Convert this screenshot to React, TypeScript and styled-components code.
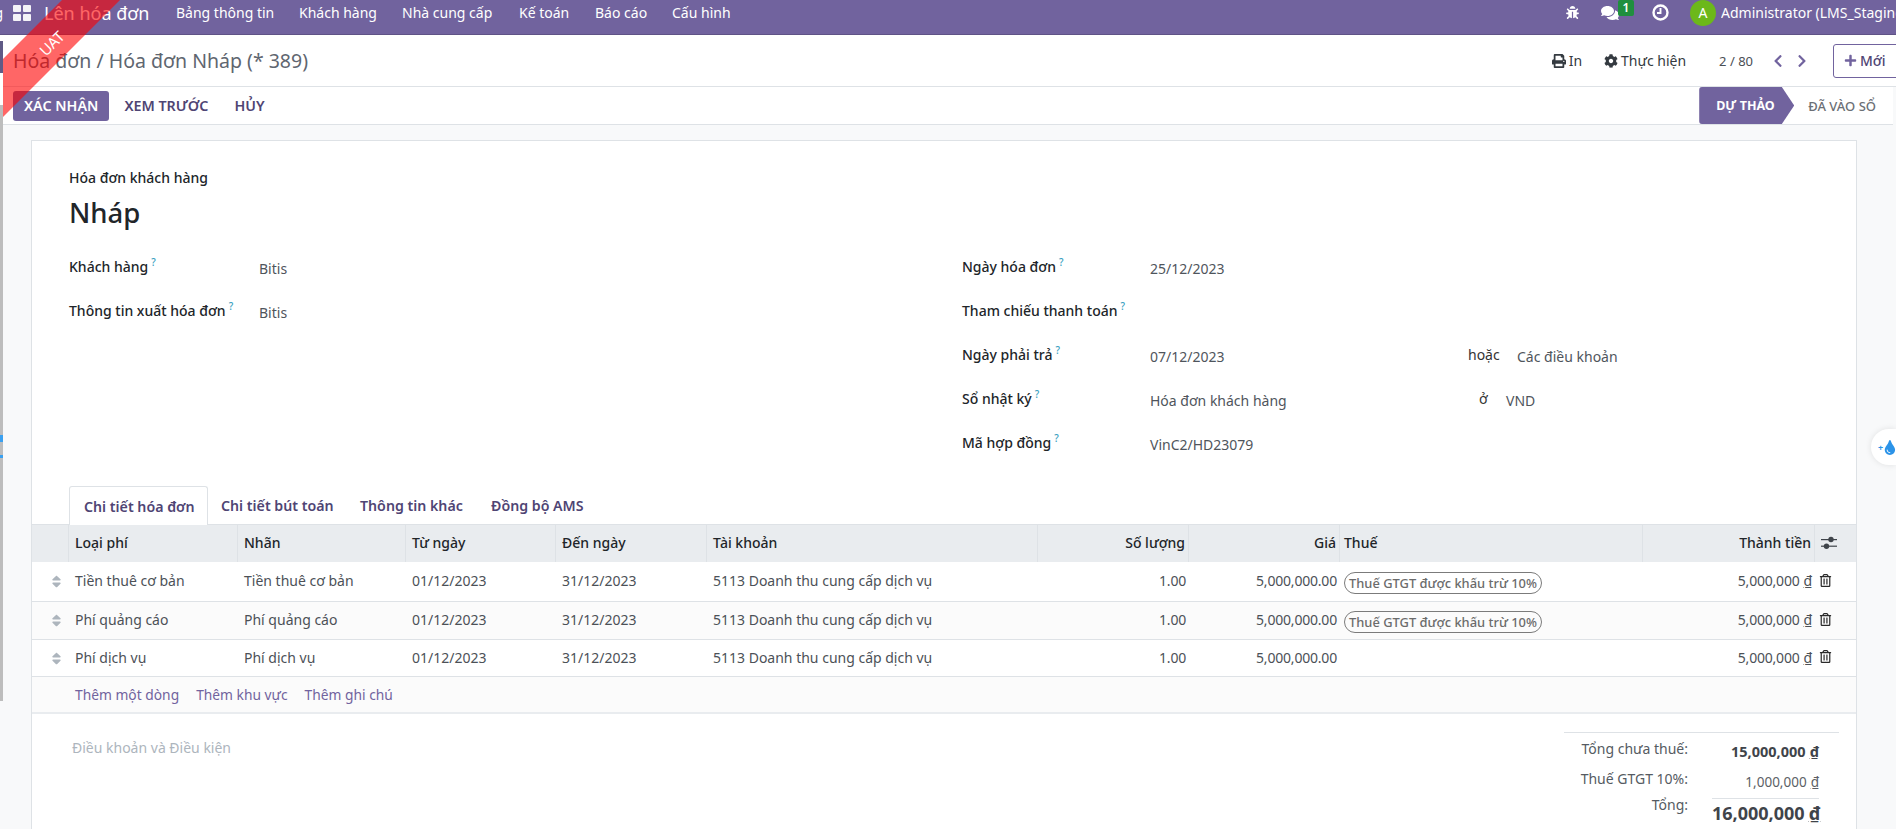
import React from "react";
import styled, { createGlobalStyle } from "styled-components";
import {
  FaBug,
  FaCog,
  FaChevronLeft,
  FaChevronRight,
  FaComments,
  FaPlus,
  FaPrint,
  FaRegTrashAlt,
  FaSort,
  FaTint,
} from "react-icons/fa";

const PURPLE = "#71639e";
const FONT = `"Noto Sans", "Open Sans", sans-serif`;

const GlobalStyle = createGlobalStyle`
  html, body {
    margin: 0;
    height: 829px;
    overflow: hidden;
    background: #f8f9fa;
    font-family: ${FONT};
    font-size: 14px;
    color: #212529;
  }
`;

const Page = styled.div`
  position: relative;
  width: 1896px;
  height: 829px;
  overflow: hidden;
  display: flex;
  flex-direction: column;
`;

const TopBar = styled.header`
  height: 35px;
  flex: none;
  background: ${PURPLE};
  border-bottom: 1px solid #5f5386;
  box-sizing: border-box;
  padding-bottom: 9px;
  display: flex;
  align-items: center;
  color: #fff;
  white-space: nowrap;
  overflow: hidden;
`;

const ClippedText = styled.span`
  width: 3px;
  overflow: hidden;
  direction: rtl;
  font-size: 14px;
  margin-right: 10px;
`;

const AppsGrid = styled.span`
  display: grid;
  grid-template-columns: 8px 8px;
  grid-template-rows: 7px 7px;
  gap: 2px;
  margin-right: 13px;

  i {
    background: #fff;
    opacity: 0.92;
    border-radius: 1px;
  }
`;

const AppName = styled.span`
  font-size: 18px;
  width: 132px;
`;

const MenuList = styled.nav`
  display: flex;
  flex: 1;
  font-size: 14px;
`;

const MenuItem = styled.span<{ $w: number }>`
  width: ${(p) => p.$w}px;
`;

const SysTray = styled.div`
  display: flex;
  align-items: center;
  font-size: 14px;
`;

const TrayIcon = styled.span<{ $mr: number }>`
  position: relative;
  display: flex;
  margin-right: ${(p) => p.$mr}px;
`;

const Badge = styled.span`
  position: absolute;
  left: 17px;
  top: -4px;
  width: 16px;
  height: 16px;
  background: #1f8f3e;
  border-radius: 2px;
  font-size: 12px;
  font-weight: 600;
  line-height: 15px;
  text-align: center;
`;

const Avatar = styled.span`
  width: 26px;
  height: 26px;
  border-radius: 50%;
  background: #6cb81a;
  font-size: 14px;
  line-height: 26px;
  text-align: center;
  margin-right: 5px;
`;

const UserName = styled.span`
  width: 175px;
  overflow: hidden;
`;

const Body = styled.div`
  flex: 1;
  display: flex;
  min-height: 0;
`;

const Rail = styled.div`
  width: 3px;
  flex: none;
  position: relative;
  background: linear-gradient(
    to bottom,
    #fff 0 6px,
    #5f5a86 6px 38px,
    #fff 38px 70px,
    #bdbdbd 70px 666px,
    #f8f9fa 666px
  );
`;

const RailMark = styled.span`
  position: absolute;
  left: 0;
  top: 396px;
  width: 3px;
  height: 34px;
  background: linear-gradient(
    to bottom,
    transparent 0 4px,
    #3aa0f0 4px 11px,
    transparent 11px 24px,
    #3aa0f0 24px 27px,
    transparent 27px
  );
`;

const Main = styled.main`
  flex: 1;
  min-width: 0;
  display: flex;
  flex-direction: column;
`;

const ControlRow = styled.div`
  height: 51px;
  flex: none;
  background: #fff;
  border-bottom: 1px solid #dee2e6;
  display: flex;
  align-items: center;
  padding-left: 10px;
  white-space: nowrap;
`;

const Breadcrumb = styled.div`
  flex: 1;
  font-size: 19.5px;
  color: #5f6670;
`;

const ActionLink = styled.span<{ $ml: number }>`
  display: flex;
  align-items: center;
  gap: 3px;
  margin-left: ${(p) => p.$ml}px;
  color: #343a40;
  font-size: 14px;

  svg {
    font-size: 14px;
  }
`;

const Pager = styled.span`
  margin-left: 33px;
  color: #4a4f55;
  font-size: 13px;
`;

const PagerArrow = styled.span<{ $ml: number }>`
  display: flex;
  margin-left: ${(p) => p.$ml}px;
  color: ${PURPLE};
  font-size: 14px;
`;

const NewButton = styled.span`
  box-sizing: border-box;
  width: 66px;
  height: 34px;
  margin-left: 24px;
  margin-right: -3px;
  border: 1px solid ${PURPLE};
  border-radius: 3px;
  display: flex;
  align-items: center;
  padding-left: 10px;
  gap: 3px;
  color: #4f4574;
  font-weight: 500;

  svg {
    font-size: 13px;
    color: ${PURPLE};
  }
`;

const ActionBar = styled.div`
  height: 38px;
  flex: none;
  margin-right: 3px;
  background: #fff;
  border-bottom: 1px solid #dee2e6;
  box-sizing: border-box;
  display: flex;
  align-items: center;
  padding-left: 10px;
`;

const ActionBtn = styled.span<{ $primary?: boolean }>`
  height: 30px;
  display: flex;
  align-items: center;
  padding: 0 11px;
  margin-right: 4px;
  border-radius: 3px;
  font-size: 14.3px;
  font-weight: 600;
  color: ${(p) => (p.$primary ? "#fff" : "#4f4574")};
  background: ${(p) => (p.$primary ? PURPLE : "transparent")};
`;

const StatusBar = styled.div`
  margin-left: auto;
  display: flex;
  align-self: stretch;
  align-items: center;
  white-space: nowrap;
`;

const StatusActive = styled.span`
  width: 95px;
  height: 37px;
  box-sizing: border-box;
  padding-left: 17px;
  display: flex;
  align-items: center;
  background: ${PURPLE};
  color: #fff;
  font-size: 12.5px;
  font-weight: 700;
  border-radius: 3px 0 0 3px;
  clip-path: polygon(0 0, 87% 0, 100% 50%, 87% 100%, 0 100%);
`;

const StatusNext = styled.span`
  margin-left: 14px;
  margin-right: 17px;
  font-size: 13px;
  font-weight: 500;
  color: #6b6f75;
`;

const Scroll = styled.div`
  flex: 1;
  padding: 15px 39px 0 28px;
  min-height: 0;
`;

const Sheet = styled.section`
  background: #fff;
  border: 1px solid #dee2e6;
  border-bottom: 0;
  height: 100%;
  box-sizing: border-box;
`;

const SheetHead = styled.div`
  padding: 27px 37px 0;
`;

const Kind = styled.div`
  font-size: 14px;
  line-height: 20px;
  font-weight: 500;
`;

const Title = styled.h1`
  margin: 5px 0 0;
  font-size: 27.5px;
  line-height: 40px;
  font-weight: 500;
`;

const FormGrid = styled.div`
  display: grid;
  grid-template-columns: 893px 1fr;
  padding: 24px 37px 0;
  height: 253px;
  box-sizing: border-box;
`;

const FormCol = styled.div`
  display: flex;
  flex-direction: column;
`;

const Field = styled.div<{ $h: number }>`
  height: ${(p) => p.$h}px;
  display: flex;
  align-items: flex-start;
`;

const Label = styled.span<{ $w: number }>`
  width: ${(p) => p.$w}px;
  flex: none;
  font-size: 14px;
  font-weight: 500;
  line-height: 20px;

  sup {
    margin-left: 3px;
    font-size: 10px;
    line-height: 0;
    color: #3a9fbf;
  }
`;

const Value = styled.span<{ $w?: number }>`
  width: ${(p) => (p.$w ? `${p.$w}px` : "auto")};
  flex: none;
  font-size: 14px;
  line-height: 24px;
  color: #4f555c;
`;

const Connector = styled.span<{ $w: number }>`
  width: ${(p) => p.$w}px;
  flex: none;
  font-size: 14px;
  line-height: 20px;
  color: #333;
`;

const Tabs = styled.div`
  display: flex;
  height: 38px;
  padding-left: 37px;
  border-bottom: 1px solid #dee2e6;
  box-sizing: content-box;
`;

const Tab = styled.span<{ $active?: boolean; $w: number }>`
  width: ${(p) => p.$w}px;
  box-sizing: border-box;
  height: 39px;
  padding-left: ${(p) => (p.$active ? 14 : 13)}px;
  display: flex;
  align-items: center;
  font-size: 14.2px;
  font-weight: 600;
  color: #4f4574;
  white-space: nowrap;
  ${(p) =>
    p.$active &&
    `
    background: #fff;
    border: 1px solid #dee2e6;
    border-bottom: 0;
    border-radius: 3px 3px 0 0;
  `}
`;

const COLUMNS =
  "37px 169px 168px 150px 151px 331px 151px 151px 303px 172px 41px";

const TableHead = styled.div`
  display: grid;
  grid-template-columns: ${COLUMNS};
  height: 37px;
  background: #e9ecef;
`;

const Th = styled.div<{ $right?: boolean; $tight?: boolean }>`
  display: flex;
  align-items: center;
  justify-content: ${(p) => (p.$right ? "flex-end" : "flex-start")};
  padding: 0 3px 2px ${(p) => (p.$tight ? 4 : 6)}px;
  border-right: 1px solid #dee2e6;
  font-size: 14px;
  font-weight: 500;
  box-sizing: border-box;
  min-width: 0;

  &:last-child {
    border-right: 0;
  }
`;

const Row = styled.div<{ $h: number; $even?: boolean }>`
  display: grid;
  grid-template-columns: ${COLUMNS};
  height: ${(p) => p.$h}px;
  box-sizing: border-box;
  background: ${(p) => (p.$even ? "#fbfbfb" : "#fff")};
  border-bottom: 1px solid #dee2e6;
`;

const Td = styled.div<{ $right?: boolean; $tight?: boolean }>`
  display: flex;
  align-items: center;
  justify-content: ${(p) => (p.$right ? "flex-end" : "flex-start")};
  padding: 0 3px 2px ${(p) => (p.$tight ? 4 : 6)}px;
  font-size: 14px;
  letter-spacing: ${(p) => (p.$right ? "-0.2px" : "0")};
  color: #4c5157;
  white-space: nowrap;
  box-sizing: border-box;
  min-width: 0;
`;

const SortCell = styled(Td)`
  justify-content: flex-end;
  padding-right: 5px;
  padding-bottom: 0;
  color: #adb5bd;
  font-size: 15px;
`;

const TrashCell = styled(Td)`
  padding-left: 4px;
  color: #2b2b2b;
  font-size: 13px;
  margin-top: -1px;
`;

const TaxPill = styled.span`
  border: 1px solid #7b7b7b;
  border-radius: 11px;
  padding: 0 4px;
  height: 22px;
  margin-top: 5px;
  box-sizing: border-box;
  line-height: 21px;
  font-size: 12.9px;
  font-weight: 500;
  color: #6b6b6b;
`;

const Currency = styled.span`
  text-decoration: underline;
  margin-left: 4px;
`;

const AddRow = styled.div`
  height: 37px;
  box-sizing: border-box;
  display: flex;
  align-items: center;
  gap: 17px;
  background: #fbfbfb;
  border-bottom: 2px solid #e9ecef;
  padding-left: 43px;
  font-size: 13.8px;
  color: #71639e;
`;

const Bottom = styled.div`
  display: flex;
  justify-content: space-between;
  align-items: flex-start;
  padding: 18px 17px 0 40px;
`;

const Terms = styled.div`
  margin-top: 6px;
  font-size: 14px;
  color: #adb5bd;
`;

const Totals = styled.div`
  width: 275px;
  border-top: 1px solid #dee2e6;
`;

const TotalRow = styled.div<{ $h: number }>`
  height: ${(p) => p.$h}px;
  display: grid;
  grid-template-columns: 124px 24px 107px;
  align-items: center;
`;

const TotalLabel = styled.span<{ $up: number }>`
  font-size: 14px;
  color: #555b62;
  text-align: right;
  margin-top: -${(p) => p.$up}px;
`;

const TotalValue = styled.span<{ $size: number; $bold?: boolean; $rule?: boolean }>`
  grid-column: 3;
  text-align: right;
  font-size: ${(p) => p.$size}px;
  font-weight: ${(p) => (p.$bold ? 700 : 400)};
  color: ${(p) => (p.$bold ? "#3f444a" : "#5c5f66")};
  white-space: nowrap;
  ${(p) => p.$rule && "border-top: 1px solid #dee2e6; padding-top: 2px;"}
`;

const Ribbon = styled.div`
  position: absolute;
  left: 3px;
  top: 0;
  width: 130px;
  height: 130px;
  overflow: hidden;
  pointer-events: none;
`;

const RibbonBand = styled.div`
  position: absolute;
  left: -60px;
  top: 25px;
  width: 205px;
  height: 41px;
  box-sizing: border-box;
  padding-left: 12px;
  transform: rotate(-45deg);
  background: rgba(255, 0, 0, 0.6);
  color: #fff;
  font-size: 15px;
  line-height: 46px;
  text-align: center;
`;

const DropWidget = styled.div`
  position: absolute;
  right: 0;
  top: 429px;
  width: 25px;
  height: 36px;
  background: #fff;
  border-radius: 18px 0 0 18px;
  box-shadow: 0 0 6px rgba(0, 0, 0, 0.1);
  display: flex;
  align-items: center;
  padding-left: 7px;
  box-sizing: border-box;
  color: #2b93e8;
  font-size: 15px;
  gap: 1px;

  small {
    font-size: 9px;
    font-weight: 700;
  }
`;

const AdjustIcon = () => (
  <svg width="16" height="14" viewBox="0 0 16 14" fill="#3f444a">
    <rect x="0" y="3" width="16" height="1.2" />
    <rect x="0" y="9.6" width="16" height="1.2" />
    <circle cx="10" cy="3.5" r="2.7" />
    <circle cx="5.5" cy="10.2" r="2.7" />
  </svg>
);

const ClockIcon = () => (
  <svg width="17" height="17" viewBox="0 0 17 17" fill="none" stroke="#fff">
    <circle cx="8.5" cy="8.5" r="7" strokeWidth="2.4" />
    <path d="M8.5 4v5H5" strokeWidth="1.9" />
  </svg>
);

const taxLabels = ["Thuế GTGT được khấu trừ 10%", "Thuế GTGT được khấu trừ 10%", ""];

const lines = [
  { name: "Tiền thuê cơ bản", h: 40 },
  { name: "Phí quảng cáo", h: 38 },
  { name: "Phí dịch vụ", h: 37 },
];

function App() {
  return (
    <Page>
      <GlobalStyle />
      <TopBar>
        <ClippedText>g</ClippedText>
        <AppsGrid>
          <i />
          <i />
          <i />
          <i />
        </AppsGrid>
        <AppName>Lên hóa đơn</AppName>
        <MenuList>
          <MenuItem $w={123}>Bảng thông tin</MenuItem>
          <MenuItem $w={103}>Khách hàng</MenuItem>
          <MenuItem $w={117}>Nhà cung cấp</MenuItem>
          <MenuItem $w={76}>Kế toán</MenuItem>
          <MenuItem $w={77}>Báo cáo</MenuItem>
          <MenuItem $w={80}>Cấu hình</MenuItem>
        </MenuList>
        <SysTray>
          <TrayIcon $mr={22}>
            <FaBug size={13} />
          </TrayIcon>
          <TrayIcon $mr={33}>
            <FaComments size={18} />
            <Badge>1</Badge>
          </TrayIcon>
          <TrayIcon $mr={21}>
            <ClockIcon />
          </TrayIcon>
          <Avatar>A</Avatar>
          <UserName>Administrator (LMS_Staging)</UserName>
        </SysTray>
      </TopBar>
      <Body>
        <Rail>
          <RailMark />
        </Rail>
        <Main>
          <ControlRow>
            <Breadcrumb>Hóa đơn / Hóa đơn Nháp (* 389)</Breadcrumb>
            <ActionLink $ml={0}>
              <FaPrint />
              In
            </ActionLink>
            <ActionLink $ml={22}>
              <FaCog />
              Thực hiện
            </ActionLink>
            <Pager>2 / 80</Pager>
            <PagerArrow $ml={18}>
              <FaChevronLeft />
            </PagerArrow>
            <PagerArrow $ml={10}>
              <FaChevronRight />
            </PagerArrow>
            <NewButton>
              <FaPlus />
              Mới
            </NewButton>
          </ControlRow>
          <ActionBar>
            <ActionBtn $primary>XÁC NHẬN</ActionBtn>
            <ActionBtn>XEM TRƯỚC</ActionBtn>
            <ActionBtn>HỦY</ActionBtn>
            <StatusBar>
              <StatusActive>DỰ THẢO</StatusActive>
              <StatusNext>ĐÃ VÀO SỔ</StatusNext>
            </StatusBar>
          </ActionBar>
          <Scroll>
            <Sheet>
              <SheetHead>
                <Kind>Hóa đơn khách hàng</Kind>
                <Title>Nháp</Title>
              </SheetHead>
              <FormGrid>
                <FormCol>
                  <Field $h={44}>
                    <Label $w={190}>
                      Khách hàng<sup>?</sup>
                    </Label>
                    <Value>Bitis</Value>
                  </Field>
                  <Field $h={44}>
                    <Label $w={190}>
                      Thông tin xuất hóa đơn<sup>?</sup>
                    </Label>
                    <Value>Bitis</Value>
                  </Field>
                </FormCol>
                <FormCol>
                  <Field $h={44}>
                    <Label $w={188}>
                      Ngày hóa đơn<sup>?</sup>
                    </Label>
                    <Value>25/12/2023</Value>
                  </Field>
                  <Field $h={44}>
                    <Label $w={188}>
                      Tham chiếu thanh toán<sup>?</sup>
                    </Label>
                  </Field>
                  <Field $h={44}>
                    <Label $w={188}>
                      Ngày phải trả<sup>?</sup>
                    </Label>
                    <Value $w={318}>07/12/2023</Value>
                    <Connector $w={49}>hoặc</Connector>
                    <Value>Các điều khoản</Value>
                  </Field>
                  <Field $h={44}>
                    <Label $w={188}>
                      Sổ nhật ký<sup>?</sup>
                    </Label>
                    <Value $w={329}>Hóa đơn khách hàng</Value>
                    <Connector $w={27}>ở</Connector>
                    <Value>VND</Value>
                  </Field>
                  <Field $h={40}>
                    <Label $w={188}>
                      Mã hợp đồng<sup>?</sup>
                    </Label>
                    <Value>VinC2/HD23079</Value>
                  </Field>
                </FormCol>
              </FormGrid>
              <Tabs>
                <Tab $active $w={139}>
                  Chi tiết hóa đơn
                </Tab>
                <Tab $w={139}>Chi tiết bút toán</Tab>
                <Tab $w={131}>Thông tin khác</Tab>
                <Tab $w={130}>Đồng bộ AMS</Tab>
              </Tabs>
              <TableHead>
                <Th />
                <Th>Loại phí</Th>
                <Th>Nhãn</Th>
                <Th>Từ ngày</Th>
                <Th>Đến ngày</Th>
                <Th>Tài khoản</Th>
                <Th $right>Số lượng</Th>
                <Th $right>Giá</Th>
                <Th $tight>Thuế</Th>
                <Th $right>Thành tiền</Th>
                <Th>
                  <AdjustIcon />
                </Th>
              </TableHead>
              {lines.map((line, i) => (
                <Row key={line.name} $h={line.h} $even={i === 1}>
                  <SortCell>
                    <FaSort />
                  </SortCell>
                  <Td>{line.name}</Td>
                  <Td>{line.name}</Td>
                  <Td>01/12/2023</Td>
                  <Td>31/12/2023</Td>
                  <Td>5113 Doanh thu cung cấp dịch vụ</Td>
                  <Td $right>1.00</Td>
                  <Td $right>5,000,000.00</Td>
                  <Td $tight>{taxLabels[i] && <TaxPill>{taxLabels[i]}</TaxPill>}</Td>
                  <Td $right>
                    5,000,000<Currency>₫</Currency>
                  </Td>
                  <TrashCell>
                    <FaRegTrashAlt />
                  </TrashCell>
                </Row>
              ))}
              <AddRow>
                <span>Thêm một dòng</span>
                <span>Thêm khu vực</span>
                <span>Thêm ghi chú</span>
              </AddRow>
              <Bottom>
                <Terms>Điều khoản và Điều kiện</Terms>
                <Totals>
                  <TotalRow $h={35}>
                    <TotalLabel $up={5}>Tổng chưa thuế:</TotalLabel>
                    <TotalValue $size={14.5} $bold>
                      15,000,000<Currency>₫</Currency>
                    </TotalValue>
                  </TotalRow>
                  <TotalRow $h={28}>
                    <TotalLabel $up={7}>Thuế GTGT 10%:</TotalLabel>
                    <TotalValue $size={13.5}>
                      1,000,000<Currency>₫</Currency>
                    </TotalValue>
                  </TotalRow>
                  <TotalRow $h={30}>
                    <TotalLabel $up={13}>Tổng:</TotalLabel>
                    <TotalValue $size={18} $bold $rule>
                      16,000,000<Currency>₫</Currency>
                    </TotalValue>
                  </TotalRow>
                </Totals>
              </Bottom>
            </Sheet>
          </Scroll>
        </Main>
      </Body>
      <Ribbon>
        <RibbonBand>UAT</RibbonBand>
      </Ribbon>
      <DropWidget>
        <small>+</small>
        <FaTint />
      </DropWidget>
    </Page>
  );
}

export default App;
